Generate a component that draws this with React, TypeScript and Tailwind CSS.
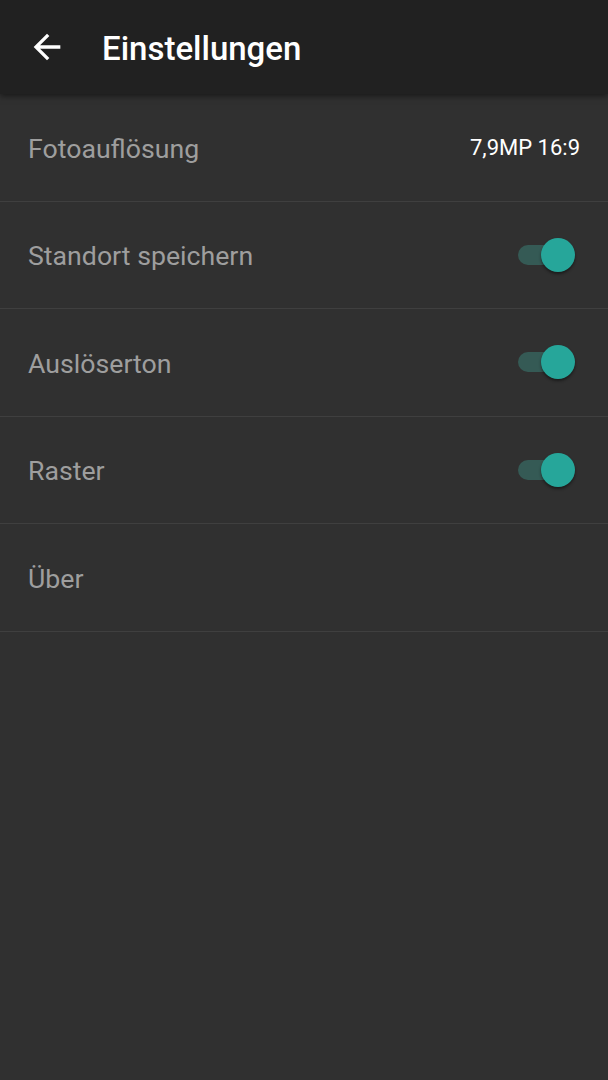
const rows = [
  { label: "Fotoauflösung", value: "7,9MP 16:9" },
  { label: "Standort speichern", toggle: true },
  { label: "Auslöserton", toggle: true },
  { label: "Raster", toggle: true },
  { label: "Über" },
];

const Toggle = () => (
  <div className="relative w-[58px] h-[34px] flex items-center">
    <div className="absolute left-[1px] w-[42px] h-[20px] rounded-full bg-[#355a55]" />
    <div className="absolute right-0 w-[34px] h-[34px] rounded-full bg-[#26a69a] shadow-[0_2px_3px_rgba(0,0,0,0.45)]" />
  </div>
);

export default function App() {
  return (
    <div
      className="w-[608px] h-[1080px] bg-[#303030] flex flex-col"
      style={{ fontFamily: "Roboto, 'Noto Sans', sans-serif" }}
    >
      {/* Toolbar */}
      <header className="relative z-10 h-[94px] bg-[#212121] flex items-center shadow-[0_2px_6px_rgba(0,0,0,0.5)]">
        <div className="w-[102px] flex justify-center pr-[8px]">
          <svg width="40" height="40" viewBox="0 0 24 24" fill="none">
            <path
              d="M20 11H7.83l5.59-5.59L12 4l-8 8 8 8 1.41-1.41L7.83 13H20v-2z"
              fill="#ffffff"
            />
          </svg>
        </div>
        <h1 className="text-[33px] leading-none font-medium text-white pt-[2px]">Einstellungen</h1>
      </header>

      {/* Settings list */}
      <div className="flex flex-col">
        {rows.map((row) => (
          <div
            key={row.label}
            className="h-[107.5px] flex items-center justify-between pl-[28px] pr-[28px] border-b border-[#3f3f3f]"
          >
            <span className="text-[26.7px] leading-none pt-[4px] text-[#9e9e9e]">{row.label}</span>
            {row.value && <span className="text-[22px] leading-none pt-[2px] text-white">{row.value}</span>}
            {row.toggle && (
              <div className="mr-[5px]">
                <Toggle />
              </div>
            )}
          </div>
        ))}
      </div>
    </div>
  );
}
